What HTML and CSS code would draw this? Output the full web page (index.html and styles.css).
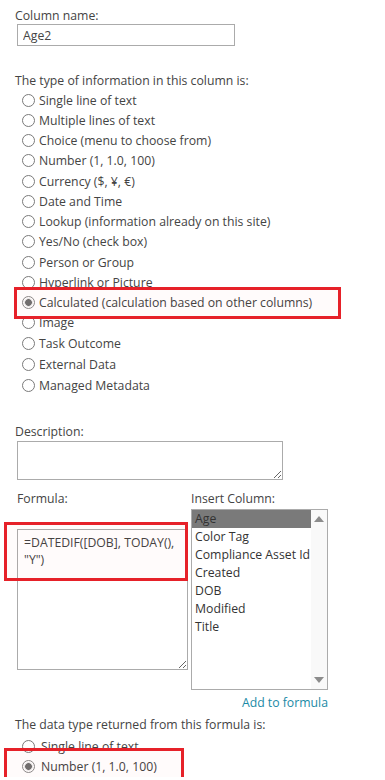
FILE: index.html
```html
<!DOCTYPE html>
<html lang="en">
  <head>
    <meta charset="UTF-8" />
    <title>Column settings</title>
    <link rel="stylesheet" href="styles.css">
  </head>
  <body>
    <div class="page">
      <div class="field">
        <label class="field-label" for="col-name">Column name:</label>
        <input type="text" id="col-name" class="text-input" value="Age2" />
      </div>

      <div class="field type-field">
        <div class="field-label">The type of information in this column is:</div>
        <ul class="radio-list">
          <li class="radio-row"><span class="radio"></span>Single line of text</li>
          <li class="radio-row"><span class="radio"></span>Multiple lines of text</li>
          <li class="radio-row"><span class="radio"></span>Choice (menu to choose from)</li>
          <li class="radio-row"><span class="radio"></span>Number (1, 1.0, 100)</li>
          <li class="radio-row"><span class="radio"></span>Currency ($, ¥, €)</li>
          <li class="radio-row"><span class="radio"></span>Date and Time</li>
          <li class="radio-row"><span class="radio"></span>Lookup (information already on this site)</li>
          <li class="radio-row"><span class="radio"></span>Yes/No (check box)</li>
          <li class="radio-row"><span class="radio"></span>Person or Group</li>
          <li class="radio-row"><span class="radio"></span>Hyperlink or Picture</li>
          <li class="radio-row highlight hl-calc"><span class="radio checked"></span>Calculated (calculation based on other columns)</li>
          <li class="radio-row"><span class="radio"></span>Image</li>
          <li class="radio-row"><span class="radio"></span>Task Outcome</li>
          <li class="radio-row spaced"><span class="radio"></span>External Data</li>
          <li class="radio-row"><span class="radio"></span>Managed Metadata</li>
        </ul>
      </div>

      <div class="field desc-field">
        <label class="field-label" for="desc">Description:</label>
        <textarea id="desc" class="desc-input"></textarea>
      </div>

      <div class="formula-row">
        <div class="formula-col">
          <label class="field-label" for="formula">Formula:</label>
          <div class="highlight hl-formula">
            <textarea id="formula" class="formula-input">=DATEDIF([DOB], TODAY(), "Y")</textarea>
          </div>
        </div>
        <div class="insert-col">
          <div class="field-label">Insert Column:</div>
          <div class="listbox">
            <ul class="list-items">
              <li class="selected">Age</li>
              <li>Color Tag</li>
              <li>Compliance Asset Id</li>
              <li>Created</li>
              <li>DOB</li>
              <li>Modified</li>
              <li>Title</li>
            </ul>
            <div class="scrollbar">
              <span class="arrow up"></span>
              <span class="arrow down"></span>
            </div>
          </div>
          <a href="#" class="add-link">Add to formula</a>
        </div>
      </div>

      <div class="field return-field">
        <div class="field-label">The data type returned from this formula is:</div>
        <ul class="radio-list">
          <li class="radio-row"><span class="radio"></span>Single line of text</li>
          <li class="radio-row highlight hl-number"><span class="radio checked"></span>Number (1, 1.0, 100)</li>
        </ul>
      </div>
    </div>
  </body>
</html>
```

FILE: styles.css
```css
* {
  margin: 0;
  padding: 0;
  box-sizing: border-box;
}

body {
  font-family: "Segoe UI", "Open Sans", sans-serif;
  font-size: 12.25px;
  color: #444;
  background: #ffffff;
}

.page {
  padding: 7px 0 0 15px;
}

.field-label {
  display: block;
  line-height: 17px;
}

.text-input {
  display: block;
  margin: 0 0 0 2px;
  width: 218px;
  height: 22px;
  border: 1px solid #ababab;
  padding: 0 5px;
  font: inherit;
  color: #444;
  outline: none;
}

.type-field {
  margin-top: 26px;
}

.radio-list {
  list-style: none;
  margin-top: 1px;
}

.radio-row {
  display: flex;
  align-items: center;
  height: 20.25px;
  padding-left: 7px;
  white-space: nowrap;
}

.radio-row.spaced {
  margin-top: 1.5px;
}

.radio {
  width: 13px;
  height: 13px;
  border: 1px solid #7a7a7a;
  border-radius: 50%;
  margin-right: 4px;
  background: #fff;
  flex-shrink: 0;
}

.radio.checked {
  border-color: #8a8a8a;
  background: radial-gradient(circle, #6f6f6f 0, #6f6f6f 3px, #d8d8d8 3.6px, #fff 4.6px);
}

/* red annotation boxes */
.highlight {
  position: relative;
}

.highlight::after {
  content: "";
  position: absolute;
  box-sizing: border-box;
  border: 3px solid #e62129;
  background: rgba(255, 0, 0, 0.015);
  pointer-events: none;
}

.hl-calc::after {
  left: -1px;
  top: -6px;
  width: 327px;
  height: 32px;
}

.desc-field {
  margin-top: 28px;
}

.desc-input {
  display: block;
  margin: 1px 0 0 2px;
  width: 266px;
  height: 39px;
  border: 1px solid #ababab;
  font: inherit;
  outline: none;
}

.formula-row {
  display: flex;
  margin-top: 10px;
}

.formula-col {
  width: 176px;
  padding-left: 2px;
}

.formula-col .field-label {
  margin-bottom: 22px;
}

.formula-input {
  display: block;
  width: 171px;
  height: 141px;
  border: 1px solid #ababab;
  padding: 4px 6px;
  font: inherit;
  line-height: 17px;
  color: #444;
  outline: none;
}

.hl-formula::after {
  left: -13px;
  top: -7px;
  width: 184px;
  height: 59px;
}

.insert-col {
  width: 137px;
}

.insert-col .field-label {
  margin-bottom: 2px;
}

.listbox {
  display: flex;
  width: 137px;
  height: 181px;
  border: 1px solid #ababab;
}

.list-items {
  list-style: none;
  flex: 1;
  overflow: hidden;
}

.list-items li {
  height: 18px;
  line-height: 18px;
  padding-left: 3px;
  white-space: nowrap;
  color: #333;
}

.list-items li.selected {
  background: #7a7a7a;
}

.scrollbar {
  width: 16px;
  background: #f9f9f9;
  display: flex;
  flex-direction: column;
  justify-content: space-between;
  align-items: center;
  padding: 6px 0;
}

.arrow {
  width: 0;
  height: 0;
  border-left: 5px solid transparent;
  border-right: 5px solid transparent;
}

.arrow.up {
  border-bottom: 6px solid #8c8c8c;
}

.arrow.down {
  border-top: 6px solid #8c8c8c;
}

.add-link {
  display: block;
  text-align: right;
  margin-top: 4px;
  color: #1a8aa6;
  text-decoration: none;
  line-height: 17px;
}

.return-field {
  margin-top: 5px;
}

.return-field .radio-list {
  margin-top: 3px;
}

.return-field .radio {
  margin-right: 6px;
}

.hl-number::after {
  left: -11px;
  top: -9px;
  width: 180px;
  height: 32px;
}
```
